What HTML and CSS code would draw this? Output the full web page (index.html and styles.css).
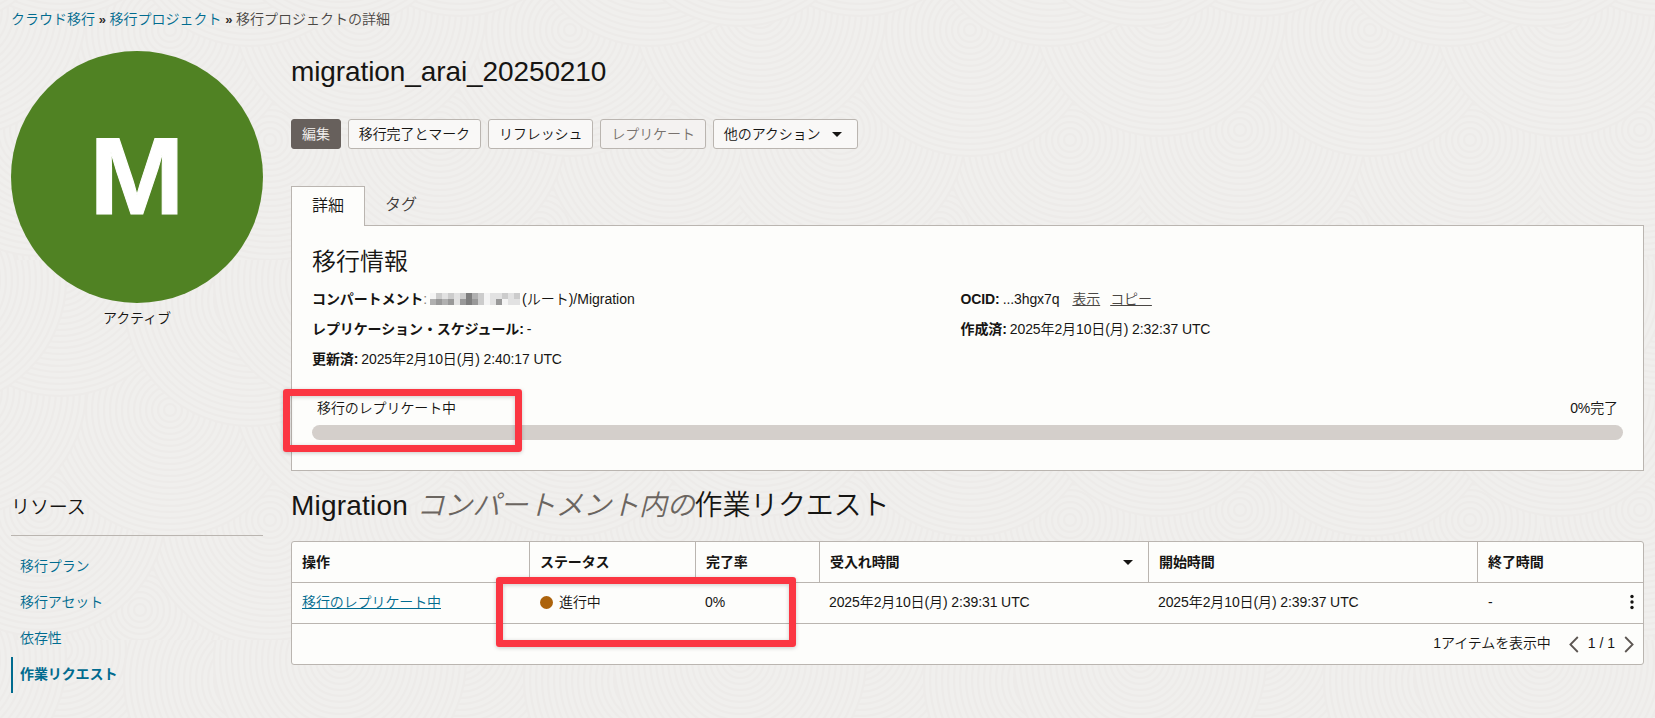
FILE: index.html
```html
<!DOCTYPE html>
<html lang="ja">
<head>
    <meta charset="UTF-8">
    <meta name="viewport" content="width=device-width, initial-scale=1.0">
    <title>移行プロジェクトの詳細</title>
    <link rel="stylesheet" href="styles.css">
</head>
<body>
    <!-- Background texture -->
    <svg class="texture" width="1655" height="718" aria-hidden="true">
        <defs>
            <g id="rings">
                <circle r="126"/><circle r="120"/><circle r="114"/><circle r="108"/><circle r="102"/><circle r="96"/><circle r="90"/>
                <circle r="84"/><circle r="78"/><circle r="72"/><circle r="66"/><circle r="60"/><circle r="54"/><circle r="48"/>
                <circle r="42"/><circle r="36"/><circle r="30"/><circle r="24"/><circle r="18"/><circle r="12"/><circle r="6"/>
            </g>
            <pattern id="waves" x="-60" y="-120" width="400" height="380" patternUnits="userSpaceOnUse">
                <use href="#rings" x="400" y="400"/>
                <use href="#rings" x="0" y="400"/>
                <use href="#rings" x="200" y="350"/>
                <use href="#rings" x="330" y="260"/>
                <use href="#rings" x="-70" y="260"/>
                <use href="#rings" x="100" y="250"/>
                <use href="#rings" x="230" y="150"/>
                <use href="#rings" x="20" y="130"/>
                <use href="#rings" x="420" y="130"/>
                <use href="#rings" x="120" y="10"/>
                <use href="#rings" x="310" y="40"/>
                <use href="#rings" x="0" y="20"/>
                <use href="#rings" x="400" y="20"/>
            </pattern>
        </defs>
        <rect width="1655" height="718" fill="url(#waves)"/>
    </svg>

    <div class="page">
        <nav class="breadcrumb">
            <a href="#">クラウド移行</a><span class="sep">»</span><a href="#">移行プロジェクト</a><span class="sep">»</span><span>移行プロジェクトの詳細</span>
        </nav>

        <div class="layout">
            <!-- Sidebar -->
            <aside class="sidebar">
                <div class="avatar"><span class="avatar-letter">M</span></div>
                <p class="state">アクティブ</p>
                <h3 class="resources-title">リソース</h3>
                <ul class="resources">
                    <li><a href="#">移行プラン</a></li>
                    <li><a href="#">移行アセット</a></li>
                    <li><a href="#">依存性</a></li>
                    <li class="active"><a href="#">作業リクエスト</a></li>
                </ul>
            </aside>

            <!-- Main content -->
            <main class="content">
                <h1 class="title">migration_arai_20250210</h1>

                <div class="actions">
                    <button class="btn btn-primary">編集</button>
                    <button class="btn">移行完了とマーク</button>
                    <button class="btn">リフレッシュ</button>
                    <button class="btn" disabled>レプリケート</button>
                    <button class="btn btn-menu">他のアクション<span class="caret"></span></button>
                </div>

                <div class="tabs">
                    <div class="tab tab-active">詳細</div>
                    <div class="tab">タグ</div>
                </div>

                <section class="panel">
                    <h2 class="panel-title">移行情報</h2>
                    <div class="info">
                        <div class="info-col">
                            <div class="field"><b>コンパートメント</b><span class="colon">:</span>
                                <svg class="mosaic" width="90" height="12" viewBox="0 0 15 2" shape-rendering="crispEdges">
                                    <path fill="#f4f4f4" d="M0 0h1v1H0zM9 0h1v2H9zM12 1h1v1h-1z"/>
                                    <path fill="#e2e2e2" d="M2 0h1v1H2zM4 0h1v2H4zM10 0h1v2h-1zM11 0h1v1h-1zM13 0h1v2h-1zM14 1h1v1h-1z"/>
                                    <path fill="#cccccc" d="M1 0h1v1H1zM3 0h1v1H3zM5 0h1v1H5zM8 0h1v2H8zM12 0h1v1h-1zM14 0h1v1h-1z"/>
                                    <path fill="#b0b0b0" d="M0 1h1v1H0zM2 1h1v1H2zM7 0h1v1H7z"/>
                                    <path fill="#999999" d="M1 1h1v1H1zM3 1h1v1H3zM5 1h1v1H5zM7 1h1v1H7zM11 1h1v1h-1z"/>
                                    <path fill="#7e7e7e" d="M6 0h1v2H6z"/>
                                </svg>
                                <span>(ルート)/Migration</span></div>
                            <div class="field"><b>レプリケーション・スケジュール:</b> -</div>
                            <div class="field"><b>更新済:</b> 2025年2月10日(月) 2:40:17 UTC</div>
                        </div>
                        <div class="info-col">
                            <div class="field"><b>OCID:</b> ...3hgx7q <a class="ocid-link" href="#">表示</a><a class="ocid-link" href="#">コピー</a></div>
                            <div class="field"><b>作成済:</b> 2025年2月10日(月) 2:32:37 UTC</div>
                        </div>
                    </div>
                    <div class="progress-text">
                        <span>移行のレプリケート中</span>
                        <span>0%完了</span>
                    </div>
                    <div class="progress-bar"></div>
                    <div class="marker marker-progress"></div>
                </section>

                <h2 class="list-title"><span>Migration</span> <em>コンパートメント内の</em>作業リクエスト</h2>

                <div class="table-box">
                    <table class="requests">
                        <colgroup>
                            <col class="c-op"><col class="c-status"><col class="c-rate"><col class="c-accepted"><col class="c-start"><col class="c-end">
                        </colgroup>
                        <thead>
                            <tr>
                                <th>操作</th>
                                <th>ステータス</th>
                                <th>完了率</th>
                                <th><div class="sortable">受入れ時間<span class="caret"></span></div></th>
                                <th>開始時間</th>
                                <th>終了時間</th>
                            </tr>
                        </thead>
                        <tbody>
                            <tr>
                                <td><a class="op-link" href="#">移行のレプリケート中</a></td>
                                <td><div class="status"><span class="dot"></span>進行中</div></td>
                                <td>0%</td>
                                <td>2025年2月10日(月) 2:39:31 UTC</td>
                                <td>2025年2月10日(月) 2:39:37 UTC</td>
                                <td>
                                    <div class="last-cell">-
                                        <svg width="4" height="16" viewBox="0 0 4 16" fill="#161513"><circle cx="2" cy="2.5" r="1.7"/><circle cx="2" cy="8" r="1.7"/><circle cx="2" cy="13.5" r="1.7"/></svg>
                                    </div>
                                </td>
                            </tr>
                        </tbody>
                    </table>
                    <div class="pager">
                        <span class="pager-count">1アイテムを表示中</span>
                        <svg class="chevron" width="10" height="17" viewBox="0 0 10 17"><path d="M8.8 1 1.4 8.5 8.8 16"/></svg>
                        <span class="pager-page">1 / 1</span>
                        <svg class="chevron" width="10" height="17" viewBox="0 0 10 17"><path d="M1.2 1 8.6 8.5 1.2 16"/></svg>
                    </div>
                    <div class="marker marker-status"></div>
                </div>
            </main>
        </div>
    </div>
</body>
</html>
```
FILE: styles.css
```css
* {
    box-sizing: border-box;
}

body {
    margin: 0;
    height: 718px;
    overflow: hidden;
    background-color: #f0efed;
    color: #161513;
    font-family: "Liberation Sans", "Noto Sans CJK JP", sans-serif;
    font-size: 14px;
    font-weight: 350;
    line-height: 20px;
    letter-spacing: -0.1px;
}

h1, h2, h3, p, ul {
    margin: 0;
    padding: 0;
    font-weight: 350;
}

a {
    color: #006b8f;
    text-decoration: none;
}

b {
    font-weight: bold;
}

/* Background texture */
.texture {
    position: absolute;
    top: 0;
    left: 0;
    z-index: -1;
}

.texture circle {
    fill: #f0efed;
    stroke: #edebe9;
    stroke-width: 2;
}

.page {
    padding: 9px 11px 0;
}

.breadcrumb {
    height: 20px;
    white-space: nowrap;
    color: #4a4744;
    letter-spacing: 0;
}

.sep {
    display: inline-block;
    width: 14.5px;
    text-align: center;
    font-size: 13px;
    font-weight: bold;
    color: #312d2a;
}

.layout {
    display: flex;
    gap: 28px;
}

/* Sidebar */
.sidebar {
    width: 252px;
    padding-top: 22px;
}

.avatar {
    display: flex;
    justify-content: center;
    align-items: center;
    width: 252px;
    height: 252px;
    border-radius: 50%;
    background-color: #508223;
}

.avatar-letter {
    color: #fff;
    font-size: 110px;
    font-weight: bold;
    line-height: 108px;
    -webkit-text-stroke: 1px #fff;
    transform: scaleX(1.04) translateY(-1px);
}

.state {
    padding-top: 5px;
    text-align: center;
}

.resources-title {
    height: 208px;
    padding-top: 166px;
    border-bottom: 1px solid #bab5b0;
    font-size: 19px;
    line-height: 28px;
}

.resources {
    padding-top: 13px;
    list-style: none;
}

.resources li {
    height: 36px;
    padding-left: 9px;
    line-height: 35px;
}

.resources .active {
    padding-left: 7px;
    border-left: 2px solid #006b8f;
    font-weight: bold;
}

/* Main content */
.content {
    width: 1353px;
}

.title {
    padding-top: 25px;
    font-size: 28px;
    line-height: 36px;
}

.actions {
    display: flex;
    gap: 7px;
    padding-top: 29px;
}

.btn {
    height: 30px;
    padding: 0 10px;
    border: 1px solid #bab5b0;
    border-radius: 3px;
    background-color: #f9f8f7;
    color: #161513;
    font: inherit;
    line-height: 27px;
    letter-spacing: -0.1px;
    white-space: nowrap;
}

.btn-primary {
    border-color: #67605c;
    background-color: #67605c;
    color: #f5f3f1;
}

.btn:disabled {
    background-color: #f4f2f1;
    color: #78726e;
}

.btn-menu {
    display: flex;
    align-items: center;
    justify-content: space-between;
    width: 145px;
    padding-right: 15px;
}

.caret {
    border: 5px solid transparent;
    border-top: 5px solid #161513;
    border-bottom: 0;
}

/* Tabs */
.tabs {
    display: flex;
    margin-top: 37px;
}

.tab {
    height: 39px;
    padding: 0 20px;
    color: #3f3b38;
    font-size: 16px;
    line-height: 38px;
    letter-spacing: 0;
}

.tab-active {
    position: relative;
    z-index: 1;
    height: 40px;
    margin-bottom: -1px;
    border: 1px solid #bab5b0;
    border-bottom: 0;
    background-color: #fdfdfb;
    color: #161513;
}

.panel {
    position: relative;
    height: 246px;
    padding: 18px 20px 0;
    border: 1px solid #bab5b0;
    background-color: #fdfdfb;
}

.panel-title {
    font-size: 24px;
    line-height: 36px;
    letter-spacing: 0;
}

.info {
    display: flex;
    padding-top: 4px;
}

.info-col {
    width: 648.5px;
}

.field {
    display: flex;
    align-items: center;
    gap: 3px;
    height: 30px;
    white-space: nowrap;
}

.colon {
    margin-left: -3px;
    color: #8b8580;
}

.mosaic + span {
    margin-left: -1px;
    letter-spacing: 0;
}

.ocid-link {
    margin-left: 7px;
    color: #4a4744;
    text-decoration: underline;
}

.ocid-link:first-of-type {
    margin-left: 10px;
}

.progress-text {
    display: flex;
    justify-content: space-between;
    padding: 24px 5px 7px 5px;
}

.progress-bar {
    height: 15px;
    border-radius: 8px;
    background-color: #d4cfcb;
}

/* Red highlight frames */
.marker {
    position: absolute;
    z-index: 2;
    border: 7px solid #fb3642;
    border-radius: 3px;
    box-shadow: 0 1px 4px rgba(0, 0, 0, 0.2), inset 0 1px 4px rgba(0, 0, 0, 0.2);
}

.marker-progress {
    top: 163px;
    left: -9px;
    width: 239px;
    height: 63px;
}

.marker-status {
    top: 35px;
    left: 204px;
    width: 300px;
    height: 70px;
}

.list-title {
    padding: 17px 0;
    font-size: 28px;
    line-height: 36px;
    letter-spacing: -0.2px;
    white-space: nowrap;
}

.list-title span {
    margin-right: 1px;
    letter-spacing: 0.2px;
}

.list-title em {
    color: #6b6560;
}

/* Work requests table */
.table-box {
    position: relative;
    border: 1px solid #bab5b0;
    border-radius: 3px;
    background-color: #fdfdfb;
}

.requests {
    width: 100%;
    table-layout: fixed;
    border-collapse: separate;
    border-spacing: 0;
}

.c-op { width: 237px; }
.c-status { width: 166px; }
.c-rate { width: 124px; }
.c-accepted { width: 329px; }
.c-start { width: 329px; }

.requests th,
.requests td {
    height: 41px;
    padding: 0 10px;
    border-bottom: 1px solid #bab5b0;
    text-align: left;
    white-space: nowrap;
}

.requests td {
    padding-bottom: 2px;
}

.requests th + th {
    border-left: 1px solid #bab5b0;
}

.requests td:nth-child(2),
.requests td:last-child {
    padding-left: 11px;
}

.op-link {
    text-decoration: underline;
}

.sortable,
.status,
.last-cell {
    display: flex;
    align-items: center;
}

.sortable,
.last-cell {
    justify-content: space-between;
}

.sortable .caret {
    margin-right: 5px;
}

.last-cell {
    margin-right: -1px;
}

.dot {
    width: 13px;
    height: 13px;
    margin-right: 6px;
    border-radius: 50%;
    background-color: #ac630c;
}

.pager {
    display: flex;
    align-items: center;
    justify-content: flex-end;
    height: 40px;
    padding: 0 9px 2px 0;
}

.pager-count {
    margin-right: 18px;
}

.pager-page {
    margin: 0 9px;
    letter-spacing: 0;
}

.chevron {
    margin-top: 3px;
    fill: none;
    stroke: #5c5652;
    stroke-width: 1.8;
}
```
